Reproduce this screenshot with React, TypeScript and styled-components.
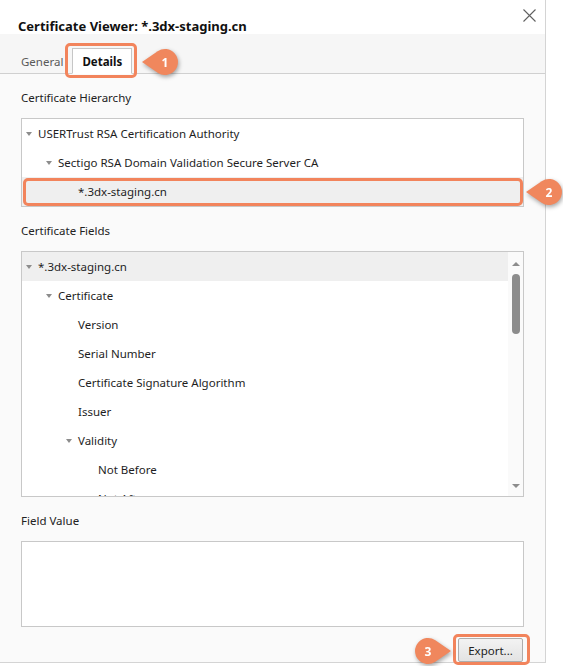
import React from "react";
import styled, {createGlobalStyle} from "styled-components";

const GlobalStyle = createGlobalStyle`
    html, body {
        margin: 0;
        padding: 0;
        background: #ffffff;
    }
    body {
        font-family: "Noto Sans", "Open Sans", sans-serif;
        color: #1a1a1a;
    }
`;

const ACCENT = "#f2845c";

const Page = styled.div`
    position: relative;
    width: 563px;
    height: 666px;
    overflow: hidden;
`;

const Dialog = styled.div`
    width: 545px;
    height: 662px;
    display: flex;
    flex-direction: column;
    background: #fafafa;
    border-right: 1px solid #d4d4d4;
    border-bottom: 1px solid #d4d4d4;
`;

const Header = styled.div`
    height: 34px;
    display: flex;
    justify-content: space-between;
    align-items: flex-start;
    padding: 0 8px 0 18px;
    background: #ffffff;
    box-sizing: border-box;
`;

const Title = styled.h1`
    margin: 0;
    align-self: flex-end;
    font-size: 13px;
    font-weight: 700;
    line-height: 14px;
    padding-bottom: 1px;
    color: #111;
`;

const CloseButton = styled.button`
    margin-top: 9px;
    width: 14px;
    height: 14px;
    padding: 0;
    border: none;
    background: transparent;
    display: flex;
`;

const TabStrip = styled.div`
    height: 40px;
    display: flex;
    align-items: flex-end;
    padding-left: 14px;
    background: #f6f6f6;
    border-bottom: 1px solid #d0d0d0;
    box-sizing: border-box;
`;

const Tab = styled.div<{ $active?: boolean }>`
    height: 26px;
    display: flex;
    align-items: center;
    box-sizing: border-box;
    margin-bottom: -1px;
    font-size: 11.5px;
    padding: ${p => (p.$active ? "0 9px" : "0 8px 0 6px")};
    font-weight: ${p => (p.$active ? 700 : 400)};
    color: ${p => (p.$active ? "#111" : "#5a5a5a")};
    background: ${p => (p.$active ? "#ffffff" : "transparent")};
    border: 1px solid ${p => (p.$active ? "#c6c6c6" : "transparent")};
    border-bottom-color: ${p => (p.$active ? "#ffffff" : "transparent")};
`;

const Content = styled.div`
    flex: 1;
    display: flex;
    flex-direction: column;
    padding: 0 21px;
`;

const SectionLabel = styled.div`
    font-size: 11.5px;
    line-height: 20px;
    margin-top: 14px;
    margin-bottom: 10px;
    color: #222;
`;

const TreeBox = styled.div<{ $height: number }>`
    height: ${p => p.$height}px;
    box-sizing: border-box;
    border: 1px solid #c8c8c8;
    background: #ffffff;
    display: flex;
    overflow: hidden;
`;

const TreeList = styled.div`
    flex: 1;
    display: flex;
    flex-direction: column;
`;

const Row = styled.div<{ $level: number; $selected?: boolean }>`
    height: 29px;
    flex-shrink: 0;
    box-sizing: border-box;
    display: flex;
    align-items: center;
    padding-left: ${p => 4 + p.$level * 20}px;
    background: ${p => (p.$selected ? "#efefef" : "transparent")};
    font-size: 11.5px;
    color: #1e1e1e;
    white-space: nowrap;
`;

const Toggle = styled.span`
    width: 12px;
    flex-shrink: 0;
    display: flex;
    align-items: center;
`;

const Caret = styled.span`
    width: 0;
    height: 0;
    border-left: 3.5px solid transparent;
    border-right: 3.5px solid transparent;
    border-top: 4px solid #8c8c8c;
`;

const Scrollbar = styled.div`
    width: 15px;
    flex-shrink: 0;
    background: #fafafa;
    display: flex;
    flex-direction: column;
    align-items: center;
    padding: 10px 0 8px;
    box-sizing: border-box;
`;

const ScrollArrow = styled.span<{ $down?: boolean }>`
    width: 0;
    height: 0;
    border-left: 4px solid transparent;
    border-right: 4px solid transparent;
    ${p => (p.$down ? "border-top: 4px solid #8c8c8c;" : "border-bottom: 4px solid #8c8c8c;")}
    ${p => (p.$down ? "margin-top: auto;" : "")}
`;

const ScrollThumb = styled.div`
    width: 8px;
    height: 60px;
    margin-top: 8px;
    border-radius: 4px;
    background: #8c8c8c;
`;

const ValueBox = styled.div`
    height: 86px;
    box-sizing: border-box;
    border: 1px solid #c8c8c8;
    background: #ffffff;
`;

const Footer = styled.div`
    display: flex;
    justify-content: flex-end;
    padding-top: 11px;
    padding-right: 1px;
`;

const ExportButton = styled.button`
    width: 65px;
    height: 24px;
    font-family: inherit;
    font-size: 11.5px;
    color: #222;
    border: 1px solid #adadad;
    border-radius: 2px;
    background: linear-gradient(#f3f3f3, #e3e3e3);
    padding: 0;
`;

const Highlight = styled.div<{ $x: number; $y: number; $w: number; $h: number }>`
    position: absolute;
    left: ${p => p.$x}px;
    top: ${p => p.$y}px;
    width: ${p => p.$w}px;
    height: ${p => p.$h}px;
    box-sizing: border-box;
    border: 3px solid ${ACCENT};
    border-radius: 5px;
    pointer-events: none;
`;

const BadgeWrap = styled.div<{ $x: number; $y: number }>`
    position: absolute;
    left: ${p => p.$x}px;
    top: ${p => p.$y}px;
    width: 40px;
    height: 30px;
    filter: drop-shadow(1px 2px 2px rgba(0, 0, 0, 0.35));
`;

const BadgeNumber = styled.span<{ $cx: number }>`
    position: absolute;
    left: ${p => p.$cx - 13}px;
    top: 2px;
    width: 26px;
    height: 26px;
    display: flex;
    align-items: center;
    justify-content: center;
    color: #ffffff;
    font-size: 12px;
    font-weight: 700;
`;

type BadgeProps = { x: number; y: number; n: number; pointRight?: boolean };

const Badge = ({x, y, n, pointRight}: BadgeProps) => {
    const left = "M2 15 L17.65 4.27 A13 13 0 1 1 17.65 25.73 Z";
    const right = "M38 15 L22.35 4.27 A13 13 0 1 0 22.35 25.73 Z";
    return (
        <BadgeWrap $x={x} $y={y}>
            <svg width="40" height="30" viewBox="0 0 40 30">
                <path d={pointRight ? right : left} fill="#f0875d"/>
            </svg>
            <BadgeNumber $cx={pointRight ? 15 : 25}>{n}</BadgeNumber>
        </BadgeWrap>
    );
};

type Node = { label: string; level: number; expandable?: boolean; selected?: boolean };

const hierarchy: Node[] = [
    {label: "USERTrust RSA Certification Authority", level: 0, expandable: true},
    {label: "Sectigo RSA Domain Validation Secure Server CA", level: 1, expandable: true},
    {label: "*.3dx-staging.cn", level: 2, selected: true},
];

const fields: Node[] = [
    {label: "*.3dx-staging.cn", level: 0, expandable: true, selected: true},
    {label: "Certificate", level: 1, expandable: true},
    {label: "Version", level: 2},
    {label: "Serial Number", level: 2},
    {label: "Certificate Signature Algorithm", level: 2},
    {label: "Issuer", level: 2},
    {label: "Validity", level: 2, expandable: true},
    {label: "Not Before", level: 3},
    {label: "Not After", level: 3},
];

const renderRows = (nodes: Node[]) =>
    nodes.map((node, i) => (
        <Row key={i} $level={node.level} $selected={node.selected}>
            <Toggle>{node.expandable && <Caret/>}</Toggle>
            {node.label}
        </Row>
    ));

export default function App() {
    return (
        <Page>
            <GlobalStyle/>
            <Dialog>
                <Header>
                    <Title>Certificate Viewer: *.3dx-staging.cn</Title>
                    <CloseButton aria-label="Close">
                        <svg width="13" height="13" viewBox="0 0 13 13">
                            <path d="M0.5 0.5 L12.5 12.5 M12.5 0.5 L0.5 12.5" stroke="#606060" strokeWidth="1.1"/>
                        </svg>
                    </CloseButton>
                </Header>
                <TabStrip>
                    <Tab>General</Tab>
                    <Tab $active>Details</Tab>
                </TabStrip>
                <Content>
                    <SectionLabel>Certificate Hierarchy</SectionLabel>
                    <TreeBox $height={89}>
                        <TreeList>{renderRows(hierarchy)}</TreeList>
                    </TreeBox>

                    <SectionLabel>Certificate Fields</SectionLabel>
                    <TreeBox $height={246}>
                        <TreeList>{renderRows(fields)}</TreeList>
                        <Scrollbar>
                            <ScrollArrow/>
                            <ScrollThumb/>
                            <ScrollArrow $down/>
                        </Scrollbar>
                    </TreeBox>

                    <SectionLabel>Field Value</SectionLabel>
                    <ValueBox/>

                    <Footer>
                        <ExportButton>Export...</ExportButton>
                    </Footer>
                </Content>
            </Dialog>

            <Highlight $x={65} $y={43} $w={72} $h={35}/>
            <Badge x={140} y={47} n={1}/>

            <Highlight $x={23} $y={178} $w={500} $h={28}/>
            <Badge x={524} y={177} n={2}/>

            <Highlight $x={453} $y={634} $w={77} $h={31}/>
            <Badge x={413} y={636} n={3} pointRight/>
        </Page>
    );
}
